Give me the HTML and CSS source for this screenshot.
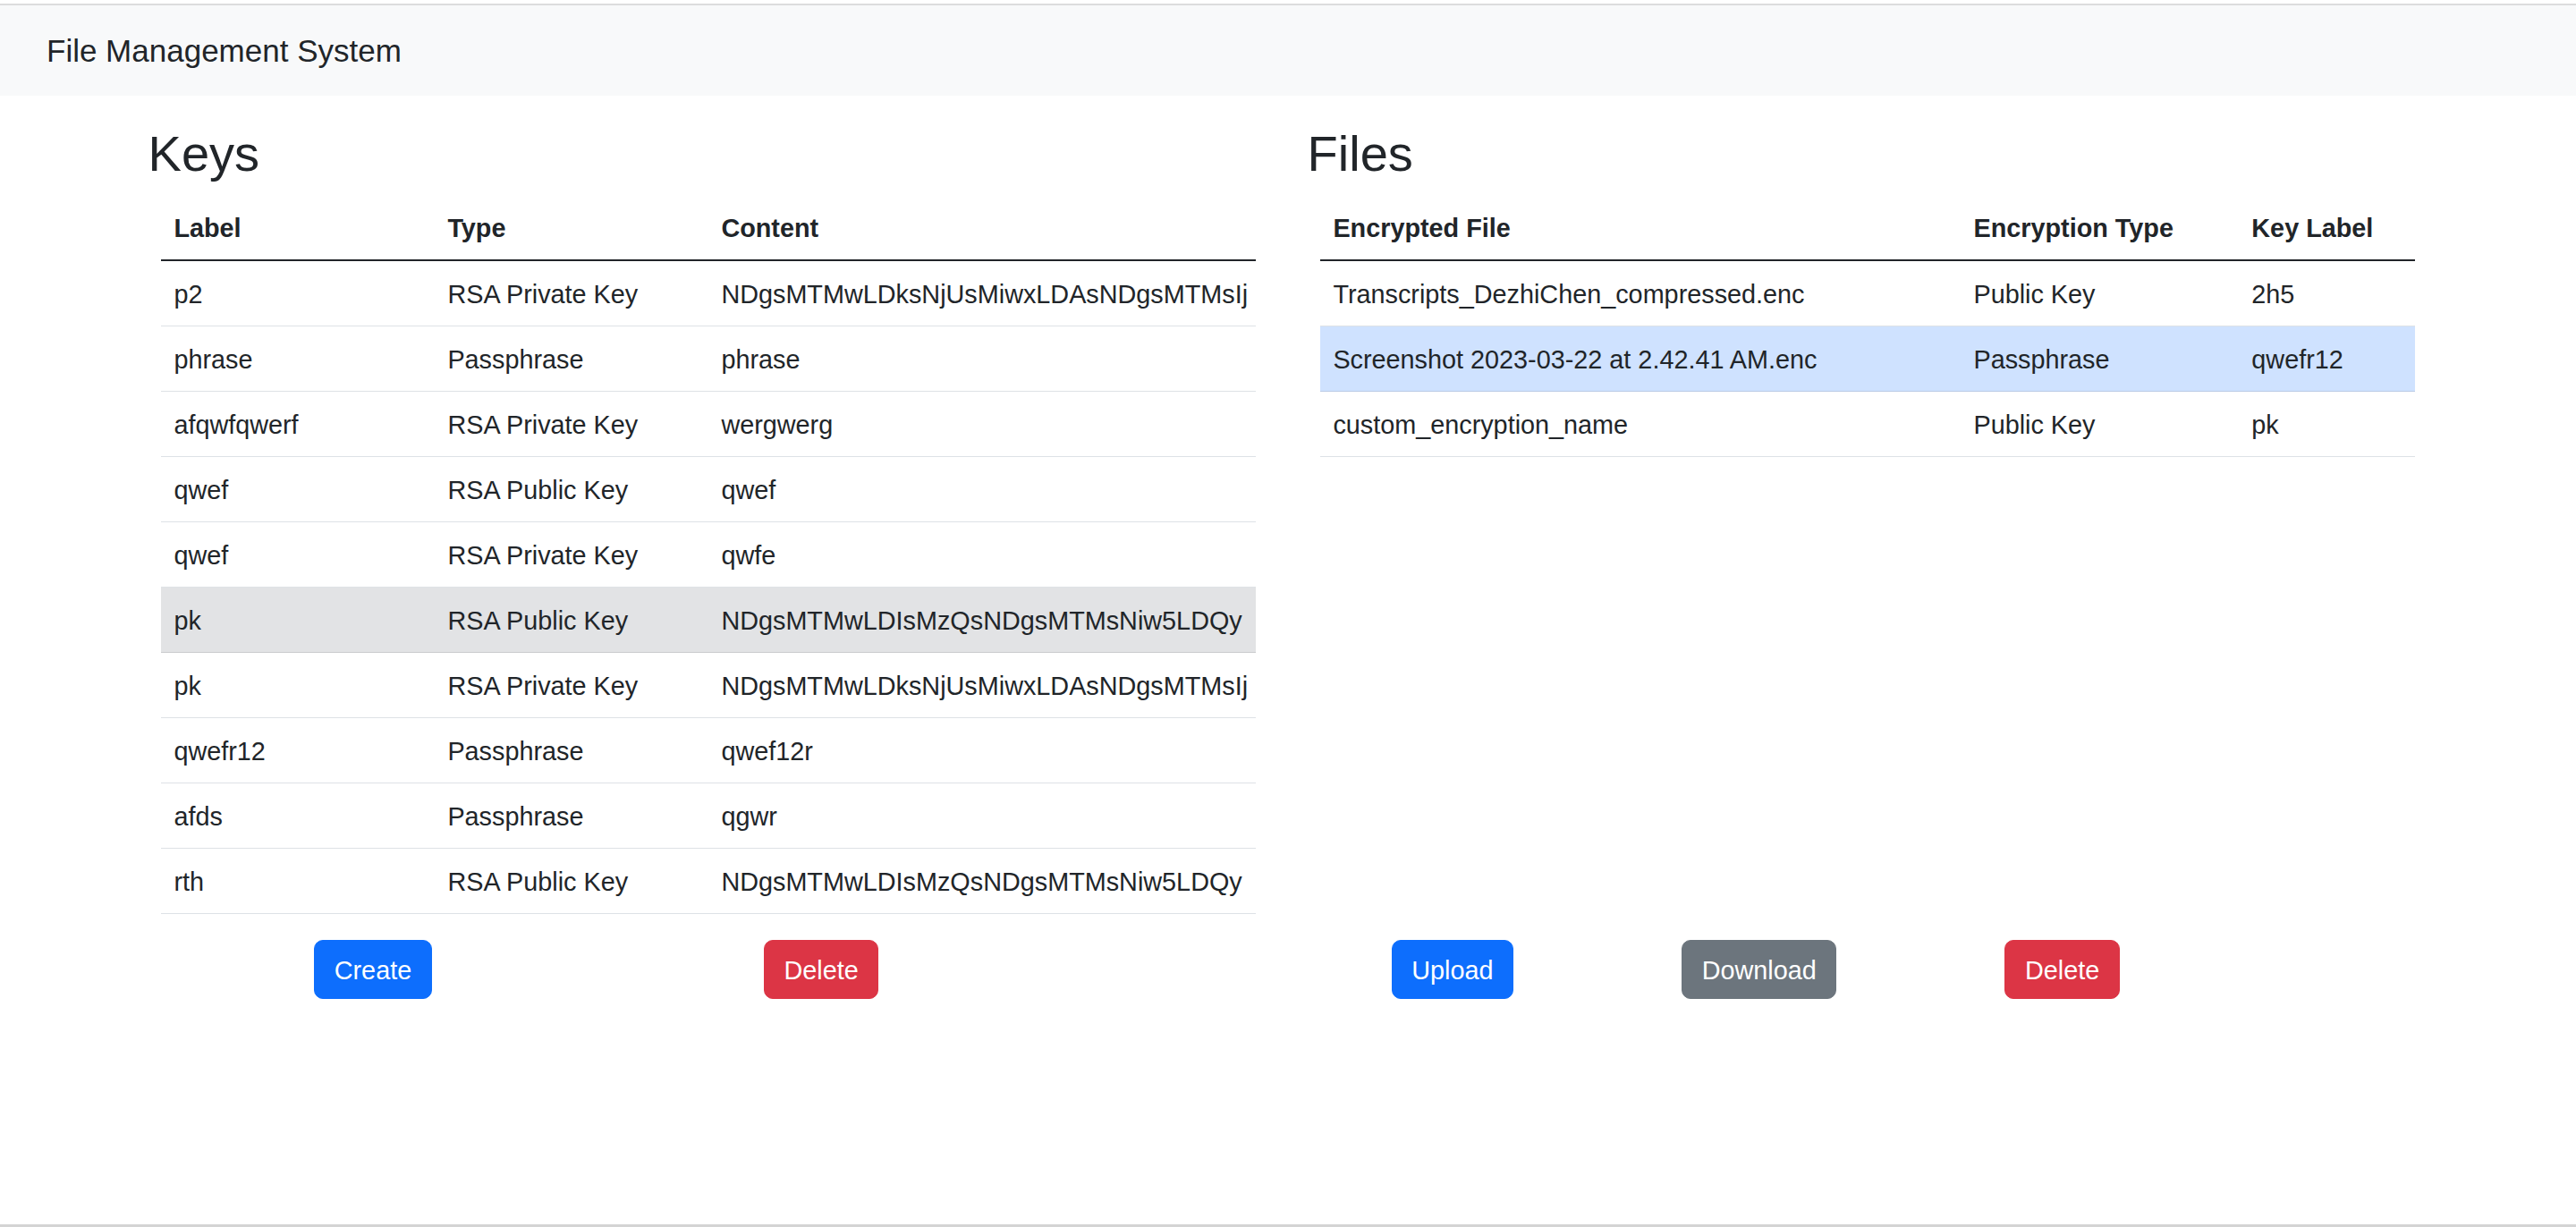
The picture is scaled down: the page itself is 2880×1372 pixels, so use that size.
FILE: index.html
```html
<!DOCTYPE html>
<html lang="en">
<head>
<meta charset="utf-8">
<title>File Management System</title>
<link rel="stylesheet" href="styles.css">
</head>
<body>
<nav class="navbar">
  <span class="brand">File Management System</span>
</nav>
<main class="main">
  <section class="panel">
    <h2 class="panel-title">Keys</h2>
    <div class="table-wrap">
      <table class="table keys">
        <colgroup><col class="c-quarter"><col class="c-quarter"><col class="c-half"></colgroup>
        <thead>
          <tr><th>Label</th><th>Type</th><th>Content</th></tr>
        </thead>
        <tbody>
          <tr><td>p2</td><td>RSA Private Key</td><td>NDgsMTMwLDksNjUsMiwxLDAsNDgsMTMsIj</td></tr>
          <tr><td>phrase</td><td>Passphrase</td><td>phrase</td></tr>
          <tr><td>afqwfqwerf</td><td>RSA Private Key</td><td>wergwerg</td></tr>
          <tr><td>qwef</td><td>RSA Public Key</td><td>qwef</td></tr>
          <tr><td>qwef</td><td>RSA Private Key</td><td>qwfe</td></tr>
          <tr class="row-gray"><td>pk</td><td>RSA Public Key</td><td>NDgsMTMwLDIsMzQsNDgsMTMsNiw5LDQy</td></tr>
          <tr><td>pk</td><td>RSA Private Key</td><td>NDgsMTMwLDksNjUsMiwxLDAsNDgsMTMsIj</td></tr>
          <tr><td>qwefr12</td><td>Passphrase</td><td>qwef12r</td></tr>
          <tr><td>afds</td><td>Passphrase</td><td>qgwr</td></tr>
          <tr><td>rth</td><td>RSA Public Key</td><td>NDgsMTMwLDIsMzQsNDgsMTMsNiw5LDQy</td></tr>
        </tbody>
      </table>
    </div>
    <div class="btn-bar">
      <button class="btn btn-primary">Create</button>
      <button class="btn btn-danger">Delete</button>
    </div>
  </section>
  <section class="panel">
    <h2 class="panel-title">Files</h2>
    <div class="table-wrap grow">
      <table class="table files">
        <colgroup><col class="c-file"><col class="c-type"><col class="c-label"></colgroup>
        <thead>
          <tr><th>Encrypted File</th><th>Encryption Type</th><th>Key Label</th></tr>
        </thead>
        <tbody>
          <tr><td>Transcripts_DezhiChen_compressed.enc</td><td>Public Key</td><td>2h5</td></tr>
          <tr class="row-blue"><td>Screenshot 2023-03-22 at 2.42.41 AM.enc</td><td>Passphrase</td><td>qwefr12</td></tr>
          <tr><td>custom_encryption_name</td><td>Public Key</td><td>pk</td></tr>
        </tbody>
      </table>
    </div>
    <div class="btn-bar">
      <button class="btn btn-primary">Upload</button>
      <button class="btn btn-secondary">Download</button>
      <button class="btn btn-danger">Delete</button>
    </div>
  </section>
</main>
<div class="bottom-line"></div>
</body>
</html>
```
FILE: styles.css
```css
* { box-sizing: border-box; }
html, body { height: 100%; }
body {
  margin: 0;
  padding-top: 4px;
  background: #fff;
  color: #212529;
  font-family: "Liberation Sans", Arial, sans-serif;
  font-size: 28.8px;
  line-height: 43.2px;
  display: flex;
  flex-direction: column;
}
.navbar {
  flex: none;
  height: 103px;
  border-top: 2px solid #dcdcdd;
  background: #f8f9fa;
  display: flex;
  align-items: center;
  padding-left: 52px;
}
.brand {
  font-size: 35px;
  line-height: 54px;
  color: #212529;
}
.main {
  flex: 1;
  display: grid;
  grid-template-columns: 1fr 1fr;
  column-gap: 43.2px;
  padding: 27.5px 165.6px 0;
  align-content: start;
}
.panel {
  display: flex;
  flex-direction: column;
  min-width: 0;
}
.panel-title {
  margin: 0 0 12.4px;
  padding-top: 2px;
  font-size: 56px;
  line-height: 69.1px;
  font-weight: 500;
}
.table-wrap {
  padding: 0 14.4px;
}
.table-wrap.grow { flex: 1; }
.table {
  width: 100%;
  border-collapse: collapse;
  table-layout: fixed;
  margin-bottom: 28.8px;
}
.c-quarter { width: 25%; }
.c-half { width: 50%; }
.c-file { width: 58.5%; }
.c-type { width: 25.4%; }
.c-label { width: 16.1%; }
.table th, .table td {
  padding: 16.4px 14.4px 12.4px;
  text-align: left;
  white-space: nowrap;
  overflow: hidden;
  vertical-align: top;
}
.table th {
  font-weight: 700;
  border-bottom: 2px solid #212529;
}
.table td {
  border-bottom: 1px solid #dee2e6;
}
.row-gray td {
  background: #e2e3e5;
  border-bottom-color: #cbccce;
}
.row-blue td {
  background: #cfe2ff;
  border-bottom-color: #bacbe6;
}
.btn-bar {
  width: 80%;
  display: flex;
  justify-content: space-around;
}
.btn {
  font-family: inherit;
  font-size: 28.8px;
  line-height: 43.2px;
  padding: 12.8px 21.6px 8.8px;
  border: 1.8px solid transparent;
  border-radius: 10px;
  color: #fff;
  cursor: pointer;
}
.btn-primary { background: #0d6efd; border-color: #0d6efd; }
.btn-danger { background: #dc3545; border-color: #dc3545; }
.btn-secondary { background: #6c757d; border-color: #6c757d; }
.bottom-line {
  flex: none;
  height: 3px;
  background: #d4d4d4;
}
```
